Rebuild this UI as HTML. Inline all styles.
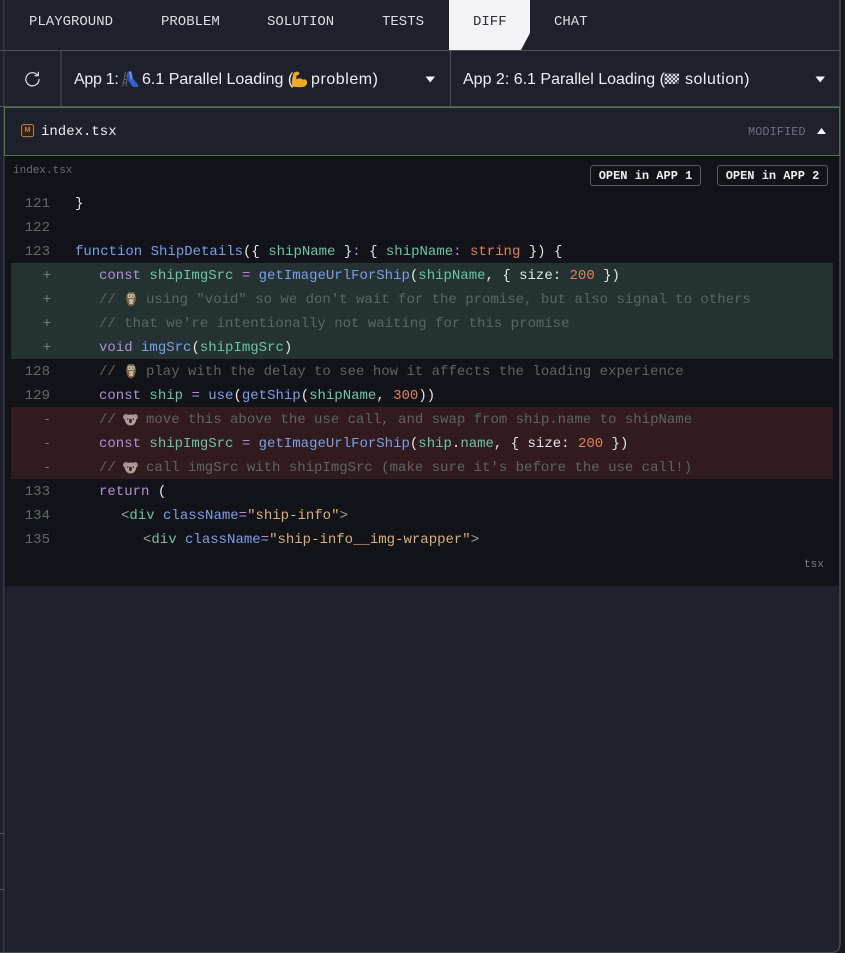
<!DOCTYPE html>
<html><head><meta charset="utf-8"><style>
html,body{margin:0;padding:0;background:#1e212b}
#p{position:relative;width:845px;height:953px;overflow:hidden;background:#1e212b;font-family:"Liberation Mono",monospace;font-size:14px;color:#e4e6ea}
#p div,#p svg,#p span.a{position:absolute}
.r{left:0;height:1px}
.t{top:13px;line-height:18px;color:#dcdee2;white-space:pre}
.s{top:68px;line-height:24px;font-family:"Liberation Sans",sans-serif;font-size:16px;color:#eceef1;white-space:pre}
.l{height:24px;line-height:24px;white-space:pre;margin-top:1px}
.n{left:0;width:50px;text-align:right;color:#5b6b6a}
.m{left:40px;width:14px;text-align:center;color:#6f8580}
.x{color:#5b6664}.k{color:#b08fd8}.v{color:#6dc4a8}.f{color:#7b9fe8}.o{color:#e0805f}.w{color:#e4e6ea}.y{color:#b48ad6}.g{color:#9a9ea6}.q{color:#d8b07a}.d{color:#5e6463}
.b{top:165px;width:109px;height:19px;border:1px solid #565a62;border-radius:3px;background:#121318;line-height:20px;text-align:center;font-size:12px;font-weight:bold;color:#eceef1}
</style></head><body><div id="p">
<div style="left:3px;top:0;width:1px;height:953px;background:#343742"></div>
<div style="left:4px;top:0;width:1px;height:953px;background:#2b2e38"></div>
<div style="left:839px;top:0;width:2px;height:953px;background:#3d4049"></div>
<div style="left:841px;top:0;width:4px;height:953px;background:#16181d"></div>
<div style="left:0;top:833px;width:4px;height:1px;background:#50535c"></div>
<div style="left:0;top:889px;width:4px;height:1px;background:#50535c"></div>
<div style="left:0;top:952px;width:835px;height:1px;background:#4a4d56"></div>
<svg style="left:832px;top:945px" width="9" height="8" viewBox="0 0 9 8"><path d="M9 0V8H0V7.500C4.500 7.500 7.500 5 7.800 0Z" fill="#16181d"/><path d="M0 7.500C4.500 7.500 7.500 5 7.800 0" fill="none" stroke="#4a4d56" stroke-width="1.200"/></svg>

<div style="left:449px;top:0;width:81px;height:50px;background:#f2f2f7;clip-path:polygon(0 0,100% 0,100% 33px,72px 100%,0 100%)"></div>
<div class="t" style="left:29px">PLAYGROUND</div>
<div class="t" style="left:161px">PROBLEM</div>
<div class="t" style="left:267px">SOLUTION</div>
<div class="t" style="left:382px">TESTS</div>
<div class="t" style="left:473px;color:#2a2d36">DIFF</div>
<div class="t" style="left:554px">CHAT</div>
<div class="r" style="top:50px;width:840px;background:#4f5259"></div>

<div style="left:60px;top:51px;width:2px;height:55px;background:#383b44"></div>
<div style="left:450px;top:51px;width:1px;height:55px;background:#4f5259"></div>
<svg style="left:24px;top:70px" width="17" height="17" viewBox="0 0 17 17" fill="none" stroke="#e4e6ea" stroke-width="1.2"><path d="M13.6 5.2A6.6 6.6 0 1 0 15 9"/><path d="M14.3 1.8v3.9h-3.9"/></svg>

<div class="s" style="left:74px;letter-spacing:-.3px">App 1:</div>
<svg style="left:121px;top:70px" width="18" height="18" viewBox="0 0 18 18"><path d="M1.500 16.500L4.500 2M5 16.500L7 2" stroke="#5f6468" stroke-width="1" fill="none"/><path d="M3.500 6h3.500M3 9.500h3.500M2 13h3.500" stroke="#5f6468"/><path d="M7 1.500h3.500l1.500 7 5 6v2.500h-5l-4.500-6z" fill="#2f5fd0"/><path d="M8 1.500h2l1.200 7-1.300 1.500z" fill="#6d96e8"/></svg>
<div class="s" style="left:142px">6.1 Parallel Loading (</div>
<svg style="left:291px;top:70px" width="17" height="18" viewBox="0 0 17 18"><path d="M1 16.500C0.500 11 1.500 6 3 2.500L7 1.500 8.500 3 7.500 5 5.500 5.500 5.200 9.500C7 8 10.500 8 12 9.800 13.500 8.800 15.500 9.500 16 11.500 16.500 14 15 16.500 12 17 8 17.500 4 17 1 16.500Z" fill="#f0ab22"/></svg>
<div class="s" style="left:311px;letter-spacing:.55px">problem)</div>
<svg style="left:425px;top:76px" width="11" height="7"><path d="M0.500 0.500h9.500L5.200 6.500z" fill="#f4f4f6"/></svg>

<div class="s" style="left:463px">App 2: 6.1 Parallel Loading (</div>
<svg style="left:664px;top:73px" width="15" height="11" viewBox="0 0 15 11"><path d="M0 0h15v11H0z" fill="#4c4f57"/><path d="M1 1h2v2H1zM5 1h2v2H5zM9 1h2v2H9zM13 1h2v2h-2zM3 3h2v2H3zM7 3h2v2H7zM11 3h2v2h-2zM1 5h2v2H1zM5 5h2v2H5zM9 5h2v2H9zM13 5h2v2h-2zM3 7h2v2H3zM7 7h2v2H7zM11 7h2v2h-2zM1 9h2v2H1zM5 9h2v2H5zM9 9h2v2H9z" fill="#d5d6da"/></svg>
<div class="s" style="left:685px;letter-spacing:.5px">solution)</div>
<svg style="left:815px;top:76px" width="11" height="7"><path d="M0.500 0.500h9.500L5.200 6.500z" fill="#f4f4f6"/></svg>

<div class="r" style="top:106px;width:840px;background:#4f5259"></div>
<div style="left:4px;top:107px;width:834px;height:47px;border:1px solid #4c7a3c;background:#1e212b"></div>
<svg style="left:21px;top:124px" width="14" height="14" viewBox="0 0 14 14"><rect x=".6" y=".6" width="12" height="12" rx="2" fill="#2b2320" stroke="#c47f3f"/></svg>
<div style="left:21px;top:124px;width:13px;height:14px;line-height:13px;text-align:center;font-family:'Liberation Sans',sans-serif;font-size:7px;font-weight:bold;color:#c47f3f">M</div>
<div style="left:41px;top:123px;line-height:18px;color:#eceef1">index.tsx</div>
<div style="left:748px;top:123px;line-height:18px;font-size:12px;color:#6b7080">MODIFIED</div>
<svg style="left:817px;top:128px" width="9" height="6"><path d="M4.500 0L9 6H0z" fill="#f4f4f6"/></svg>

<div style="left:5px;top:156px;width:834px;height:430px;background:#121318"></div>
<div style="left:13px;top:163px;line-height:16px;font-size:11px;color:#6b6f76">index.tsx</div>
<div class="b" style="left:590px">OPEN in APP 1</div>
<div class="b" style="left:717px">OPEN in APP 2</div>
<div style="left:11px;top:263px;width:822px;height:96px;background:#243232"></div>
<div style="left:11px;top:407px;width:822px;height:72px;background:#311b1e"></div>

<div class="l n" style="top:191px">121</div><div class="l" style="left:75px;top:191px">}</div>
<div class="l n" style="top:215px">122</div>
<div class="l n" style="top:239px">123</div><div class="l" style="left:75px;top:239px"><span class="f">function ShipDetails</span>({ <span class="v">shipName</span> }<span class="y">:</span> { <span class="v">shipName</span><span class="y">:</span> <span class="o">string</span> }) {</div>

<div class="l m" style="top:263px">+</div><div class="l" style="left:99px;top:263px"><span class="k">const</span> <span class="v">shipImgSrc</span> <span class="y">=</span> <span class="f">getImageUrlForShip</span>(<span class="v">shipName</span>, { size: <span class="o">200</span> })</div>
<div class="l m" style="top:287px">+</div><div class="l x" style="left:99px;top:287px">//</div>
<svg style="left:125px;top:291px" width="12" height="16" viewBox="0 0 12 16"><path d="M2 3L3.500 1h5L10 3l1 5-2 6-3 1.500L3 14 1 8z" fill="#7a6248"/><circle cx="4.500" cy="5" r="2" fill="#d9cdb4"/><circle cx="7.800" cy="5" r="2" fill="#d9cdb4"/><path d="M4 8h4.500l-.5 5H4.500z" fill="#c2b59b"/><circle cx="4.500" cy="5" r=".8" fill="#222"/><circle cx="7.800" cy="5" r=".8" fill="#222"/></svg>
<div class="l x" style="left:146px;top:287px">using "void" so we don't wait for the promise, but also signal to others</div>
<div class="l m" style="top:311px">+</div><div class="l x" style="left:99px;top:311px">// that we're intentionally not waiting for this promise</div>
<div class="l m" style="top:335px">+</div><div class="l" style="left:99px;top:335px"><span class="k">void</span> <span class="f">imgSrc</span>(<span class="v">shipImgSrc</span>)</div>

<div class="l n" style="top:359px">128</div><div class="l x" style="left:99px;top:359px">//</div>
<svg style="left:125px;top:363px" width="12" height="16" viewBox="0 0 12 16"><path d="M2 3L3.500 1h5L10 3l1 5-2 6-3 1.500L3 14 1 8z" fill="#7a6248"/><circle cx="4.500" cy="5" r="2" fill="#d9cdb4"/><circle cx="7.800" cy="5" r="2" fill="#d9cdb4"/><path d="M4 8h4.500l-.5 5H4.500z" fill="#c2b59b"/><circle cx="4.500" cy="5" r=".8" fill="#222"/><circle cx="7.800" cy="5" r=".8" fill="#222"/></svg>
<div class="l x" style="left:146px;top:359px">play with the delay to see how it affects the loading experience</div>
<div class="l n" style="top:383px">129</div><div class="l" style="left:99px;top:383px"><span class="k">const</span> <span class="v">ship</span> <span class="y">=</span> <span class="f">use</span>(<span class="f">getShip</span>(<span class="v">shipName</span>, <span class="o">300</span>))</div>

<div class="l m" style="top:407px;color:#7a6a6a">-</div><div class="l d" style="left:99px;top:407px">//</div>
<svg style="left:123px;top:413px" width="15" height="13" viewBox="0 0 15 13"><circle cx="3" cy="4" r="3" fill="#a88b8b"/><circle cx="12" cy="4" r="3" fill="#a88b8b"/><circle cx="7.500" cy="7" r="5.500" fill="#b39b9b"/><ellipse cx="7.500" cy="8" rx="1.500" ry="2.200" fill="#3a2a2c"/><circle cx="4.800" cy="6" r=".8" fill="#222"/><circle cx="10.200" cy="6" r=".8" fill="#222"/></svg>
<div class="l d" style="left:146px;top:407px">move this above the use call, and swap from ship.name to shipName</div>
<div class="l m" style="top:431px;color:#7a6a6a">-</div><div class="l" style="left:99px;top:431px"><span class="k">const</span> <span class="v">shipImgSrc</span> <span class="y">=</span> <span class="f">getImageUrlForShip</span>(<span class="v">ship</span>.<span class="v">name</span>, { size: <span class="o">200</span> })</div>
<div class="l m" style="top:455px;color:#7a6a6a">-</div><div class="l d" style="left:99px;top:455px">//</div>
<svg style="left:123px;top:461px" width="15" height="13" viewBox="0 0 15 13"><circle cx="3" cy="4" r="3" fill="#a88b8b"/><circle cx="12" cy="4" r="3" fill="#a88b8b"/><circle cx="7.500" cy="7" r="5.500" fill="#b39b9b"/><ellipse cx="7.500" cy="8" rx="1.500" ry="2.200" fill="#3a2a2c"/><circle cx="4.800" cy="6" r=".8" fill="#222"/><circle cx="10.200" cy="6" r=".8" fill="#222"/></svg>
<div class="l d" style="left:146px;top:455px">call imgSrc with shipImgSrc (make sure it's before the use call!)</div>

<div class="l n" style="top:479px">133</div><div class="l" style="left:99px;top:479px"><span class="k">return</span> (</div>
<div class="l n" style="top:503px">134</div><div class="l" style="left:121px;top:503px"><span class="g">&lt;</span><span class="v">div</span> <span class="f">className</span><span class="y">=</span><span class="q">"ship-info"</span><span class="g">&gt;</span></div>
<div class="l n" style="top:527px">135</div><div class="l" style="left:143px;top:527px"><span class="g">&lt;</span><span class="v">div</span> <span class="f">className</span><span class="y">=</span><span class="q">"ship-info__img-wrapper"</span><span class="g">&gt;</span></div>
<div style="left:804px;top:557px;line-height:16px;font-size:11px;color:#7b7f86">tsx</div>
</div></body></html>
